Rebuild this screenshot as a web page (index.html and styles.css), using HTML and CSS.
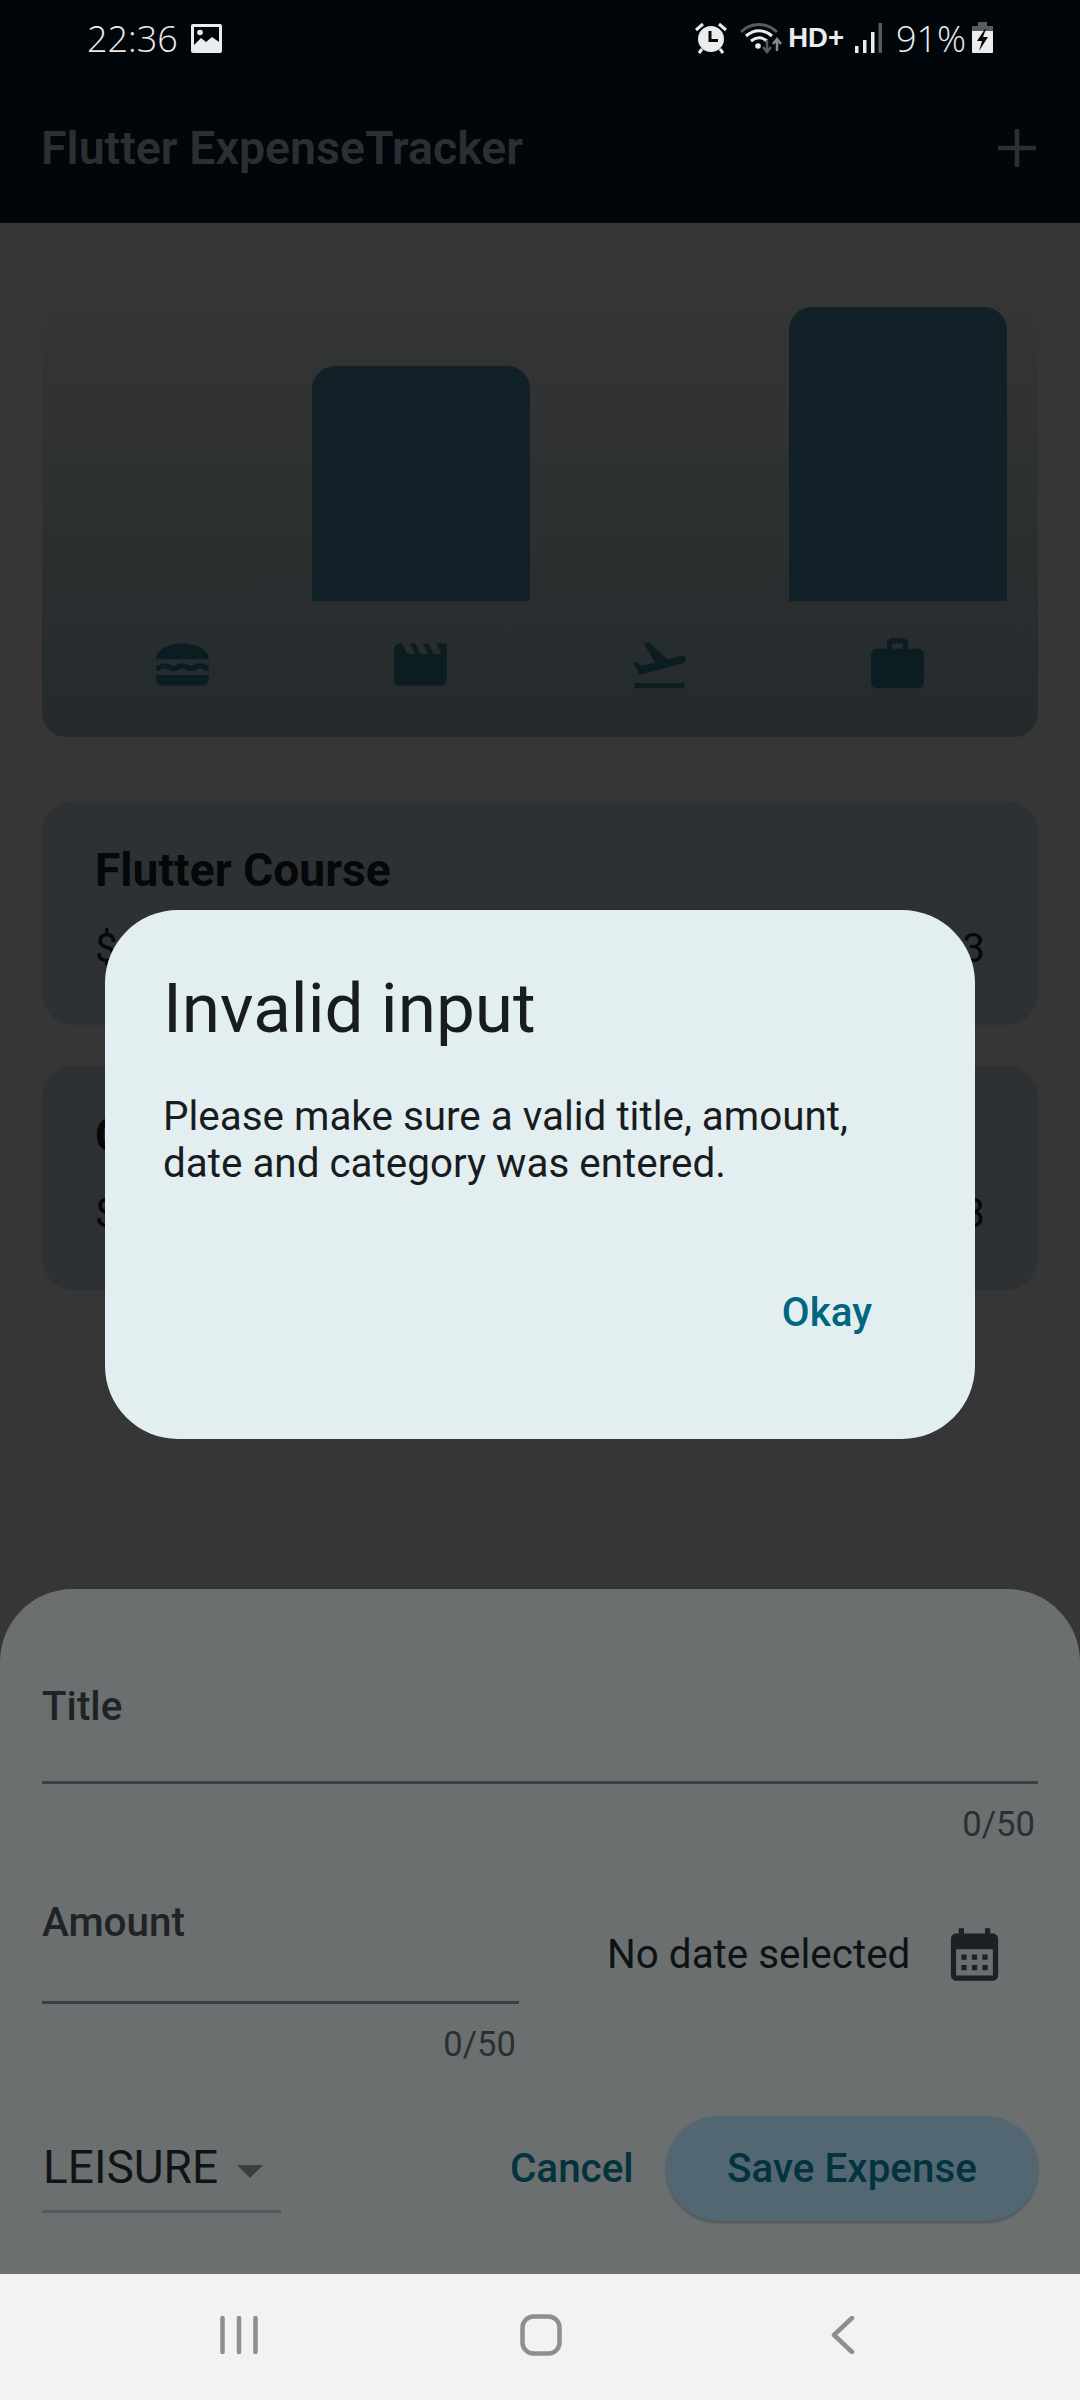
FILE: index.html

```html
<!DOCTYPE html>
<html lang="en">
<head>
  <meta charset="UTF-8">
  <meta name="viewport" content="width=device-width, initial-scale=1.0">
  <title>Flutter ExpenseTracker</title>
  <link rel="stylesheet" href="styles.css">
</head>
<body>
  <div class="phone">
    <div class="top">
      <div class="status">
        <div class="status-left">
          <span class="clock">22:36</span>
          <svg class="st-image" width="31" height="29" viewBox="0 0 31 29">
            <rect width="31" height="29" rx="2" fill="#ececec"/>
            <rect x="3" y="3" width="25" height="19" fill="#01060b"/>
            <circle cx="9" cy="8.500" r="2.800" fill="#ececec"/>
            <path d="M3 21l7-7 5 4 6-5 7 5v5H3z" fill="#ececec"/>
          </svg>
        </div>
        <div class="status-right">
          <svg class="st-alarm" width="34" height="32" viewBox="0 0 34 32">
            <path d="M2 8l7-6M32 8l-7-6M8 27l-3 4M26 27l3 4" stroke="#ececec" stroke-width="3" fill="none"/>
            <circle cx="17" cy="17" r="13" fill="#ececec"/>
            <path d="M16 9v9.500h8" stroke="#01060b" stroke-width="3" fill="none"/>
          </svg>
          <svg class="st-wifi" width="42" height="32" viewBox="0 0 42 32">
            <path d="M1 10C11 0 27 0 37 10" stroke="#5a5a5a" stroke-width="3" fill="none"/>
            <path d="M6 14c8-7 18-7 26 0M11 19c5-4 11-4 16 0" stroke="#ececec" stroke-width="3" fill="none"/>
            <circle cx="18" cy="24" r="2.800" fill="#ececec"/>
            <path d="M27 18v11M23 25l4 5 4-5" stroke="#5a5a5a" stroke-width="2.500" fill="none"/>
            <path d="M37 29V18M33 22l4-5 4 5" stroke="#8a8a8a" stroke-width="2.500" fill="none"/>
          </svg>
          <span class="hd">HD+</span>
          <svg class="st-signal" width="27" height="30" viewBox="0 0 27 30">
            <rect x="0" y="23" width="3.500" height="7" fill="#ececec"/>
            <rect x="8" y="17" width="3.500" height="13" fill="#ececec"/>
            <rect x="16" y="9" width="3.500" height="21" fill="#ececec"/>
            <rect x="23.500" y="0" width="3.500" height="30" fill="#5a5a5a"/>
          </svg>
          <span class="percent">91%</span>
          <svg class="st-battery" width="21" height="32" viewBox="0 0 21 32">
            <path d="M6 0h9v4h6v5H0V4h6z" fill="#5a5a5a"/>
            <path d="M0 9h21v21a1 1 0 0 1-1 1H1a1 1 0 0 1-1-1z" fill="#ececec"/>
            <path d="M13 7L5 19h5l-3 10 9-14h-5l3-8z" fill="#01060b"/>
          </svg>
        </div>
      </div>
      <div class="appbar">
        <span class="appbar-title">Flutter ExpenseTracker</span>
        <svg class="add-icon" width="38" height="38" viewBox="0 0 38 38">
          <path d="M19 0v38M0 19h38" stroke="#2a2f33" stroke-width="4.500"/>
        </svg>
      </div>
    </div>

    <main class="content">
      <section class="chart">
        <div class="bars">
          <div class="bar-col"></div>
          <div class="bar-col"><div class="bar" style="height: 74.6%"></div></div>
          <div class="bar-col"></div>
          <div class="bar-col"><div class="bar" style="height: 93.3%"></div></div>
        </div>
        <div class="chart-icons">
          <div class="chart-icon"><svg width="63" height="63" viewBox="0 0 24 24"><path d="M22 10c.32-3.280-4.280-6-9.990-6S1.670 6.720 2.010 10H22zM5.350 13.500c.550 0 .780.140 1.150.360.450.270 1.070.640 2.180.640s1.730-.370 2.180-.640c.370-.230.590-.360 1.150-.360.550 0 .780.140 1.150.360.450.270 1.070.640 2.180.640s1.730-.370 2.180-.640c.370-.230.590-.360 1.150-.360.550 0 .780.140 1.150.360.450.270 1.070.630 2.170.640v-1.980s-.790-.160-1.160-.380c-.450-.270-1.070-.640-2.180-.640s-1.730.370-2.180.640c-.370.230-.600.360-1.150.360s-.780-.140-1.150-.360c-.450-.270-1.070-.640-2.180-.640s-1.730.370-2.180.640c-.370.230-.590.360-1.150.360-.550 0-.780-.140-1.150-.360-.450-.270-1.070-.640-2.180-.640s-1.730.370-2.180.640c-.370.230-.590.360-1.150.360v1.980c1.110 0 1.730-.370 2.210-.640.370-.230.590-.360 1.140-.360zM2 16v2c0 1.100.900 2 2 2h16c1.100 0 2-.900 2-2v-2H2z"/></svg></div>
          <div class="chart-icon"><svg width="63" height="63" viewBox="0 0 24 24"><path d="M18 4l2 4h-3l-2-4h-2l2 4h-3l-2-4H8l2 4H7L5 4H4c-1.100 0-1.990.900-1.990 2L2 18c0 1.100.900 2 2 2h16c1.100 0 2-.900 2-2V4h-4z"/></svg></div>
          <div class="chart-icon"><svg width="63" height="63" viewBox="0 0 24 24"><path d="M2.500 19h19v2h-19zm19.570-9.360c-.210-.800-1.040-1.280-1.840-1.060L14.920 10l-6.900-6.430-1.930.510 4.140 7.170-4.970 1.330-1.970-1.540-1.450.390 2.590 4.490L21 11.490c.810-.230 1.280-1.050 1.070-1.850z"/></svg></div>
          <div class="chart-icon"><svg width="63" height="63" viewBox="0 0 24 24"><path d="M20 6h-4V4c0-1.110-.890-2-2-2h-4c-1.110 0-2 .890-2 2v2H4c-1.110 0-1.990.890-1.990 2L2 19c0 1.110.890 2 2 2h16c1.110 0 2-.890 2-2V8c0-1.110-.890-2-2-2zm-6 0h-4V4h4v2z"/></svg></div>
        </div>
      </section>

      <section class="expense">
        <h2 class="expense-title">Flutter Course</h2>
        <div class="expense-row"><span>$19.99</span><span>8/21/2023</span></div>
      </section>
      <section class="expense">
        <h2 class="expense-title">Cinema</h2>
        <div class="expense-row"><span>$15.69</span><span>8/21/2023</span></div>
      </section>
    </main>

    <div class="sheet">
      <div class="field">
        <div class="field-label">Title</div>
        <div class="field-line"></div>
        <div class="counter">0/50</div>
      </div>
      <div class="amount-row">
        <div class="field amount">
          <div class="field-label">Amount</div>
          <div class="field-line"></div>
          <div class="counter">0/50</div>
        </div>
        <div class="date-pick">
          <span>No date selected</span>
          <svg width="63" height="63" viewBox="0 0 24 24"><path d="M19 4h-1V2h-2v2H8V2H6v2H5c-1.110 0-1.990.900-1.990 2L3 20c0 1.100.890 2 2 2h14c1.100 0 2-.900 2-2V6c0-1.100-.900-2-2-2zm0 16H5V10h14v10zM9 14H7v-2h2v2zm4 0h-2v-2h2v2zm4 0h-2v-2h2v2zm-8 4H7v-2h2v2zm4 0h-2v-2h2v2zm4 0h-2v-2h2v2z"/></svg>
        </div>
      </div>
      <div class="actions">
        <div class="dropdown">
          <span>LEISURE</span>
          <i class="caret"></i>
        </div>
        <span class="btn-text">Cancel</span>
        <span class="btn-save">Save Expense</span>
      </div>
    </div>

    <div class="dialog">
      <h1 class="dialog-title">Invalid input</h1>
      <p class="dialog-body">Please make sure a valid title, amount, date and category was entered.</p>
      <div class="dialog-actions"><span class="okay">Okay</span></div>
    </div>

    <nav class="navbar">
      <svg width="38" height="38" viewBox="0 0 38 38"><path d="M2.500 2v34M19 2v34M35.500 2v34" stroke="#8e8e8e" stroke-width="4.500" stroke-linecap="round"/></svg>
      <svg width="42" height="42" viewBox="0 0 42 42"><rect x="2.500" y="2.500" width="37" height="37" rx="11" fill="none" stroke="#8e8e8e" stroke-width="4.500"/></svg>
      <svg width="24" height="38" viewBox="0 0 24 38"><path d="M21 2L3 19l18 17" fill="none" stroke="#8e8e8e" stroke-width="4.500" stroke-linecap="round" stroke-linejoin="round"/></svg>
    </nav>
  </div>
</body>
</html>
```

FILE: styles.css

```css
* {
  box-sizing: border-box;
}
body {
  margin: 0;
  font-family: Roboto, "Noto Sans", sans-serif;
  background-color: #363636;
}
.phone {
  position: relative;
  width: 1080px;
  height: 2400px;
  overflow: hidden;
  background-color: #363636;
}

/* status + app bar */
.top {
  height: 223px;
  background-color: #01060b;
}
.status {
  height: 70px;
  display: flex;
  justify-content: space-between;
  align-items: center;
  padding: 6px 87px 0;
  color: #ececec;
}
.status-left, .status-right {
  display: flex;
  align-items: center;
}
.clock {
  font-family: "Open Sans", sans-serif;
  font-weight: 300;
  font-size: 36px;
  margin-right: 13px;
}
.status-right svg, .hd, .percent {
  flex: none;
}
.st-wifi { margin-left: 12px; }
.hd {
  margin-left: 6px;
  font-family: "Liberation Sans", sans-serif;
  font-weight: 700;
  font-size: 27.500px;
}
.st-signal { margin-left: 11px; }
.percent {
  margin-left: 14px;
  font-family: "Open Sans", sans-serif;
  font-weight: 300;
  font-size: 36px;
  width: 76px;
}
.st-battery { margin-left: 0; }
.appbar {
  height: 153px;
  display: flex;
  justify-content: space-between;
  align-items: center;
  padding: 2px 44px 0 41px;
}
.appbar-title {
  font-size: 46.500px;
  font-weight: 600;
  color: #2a2f33;
}
.add-icon {
  margin-top: 1px;
}

/* chart */
.content {
  padding: 42px 42px 0;
}
.chart {
  height: 472px;
  padding: 21px 21px 41px;
  border-radius: 24px;
  background: linear-gradient(#363636, #242a2c);
  display: flex;
  flex-direction: column;
}
.bars {
  height: 315px;
  display: flex;
  align-items: flex-end;
}
.bar-col {
  flex: 1;
  height: 100%;
  padding: 0 10.500px;
  display: flex;
  align-items: flex-end;
}
.bar {
  width: 100%;
  background-color: #112127;
  border-radius: 23px 23px 0 0;
}
.chart-icons {
  display: flex;
  margin-top: 31.500px;
}
.chart-icon {
  flex: 1;
  height: 63px;
  display: flex;
  justify-content: center;
  fill: #0c1d22;
}

/* expense list */
.expense {
  height: 224px;
  margin-top: 64px;
  padding: 42px 53px 0;
  border-radius: 32px;
  background-color: #2d3134;
  color: #050708;
}
.expense + .expense {
  margin-top: 41px;
}
.expense-title {
  margin: 0;
  font-size: 46.200px;
  font-weight: 700;
}
.expense-row {
  margin-top: 28px;
  display: flex;
  justify-content: space-between;
  font-size: 40.400px;
}

/* dialog */
.dialog {
  position: absolute;
  left: 105px;
  top: 910px;
  width: 870px;
  height: 529px;
  padding: 58px 58px 0;
  border-radius: 73px;
  background-color: #e2eef0;
}
.dialog-title {
  margin: 0;
  font-size: 69.300px;
  font-weight: 400;
  color: #191c1e;
}
.dialog-body {
  margin: 44px 0 0;
  font-size: 40.400px;
  line-height: 47px;
  color: #191c1e;
}
.dialog-actions {
  margin-top: 102px;
  display: flex;
  justify-content: flex-end;
  padding-right: 45px;
}
.okay {
  font-size: 40.400px;
  font-weight: 500;
  color: #006780;
}

/* bottom sheet */
.sheet {
  position: absolute;
  left: 0;
  top: 1589px;
  width: 1080px;
  height: 685px;
  padding: 93px 42px 0;
  border-radius: 73px 73px 0 0;
  background-color: #6b6f70;
}
.field-label {
  height: 50px;
  font-size: 40.400px;
  font-weight: 500;
  line-height: 50px;
  color: #1f2325;
}
.field-line {
  height: 3px;
  margin-top: 49px;
  background-color: #3c4043;
}
.counter {
  margin-top: 20px;
  padding-right: 3px;
  text-align: right;
  font-size: 34.650px;
  color: #2b2f31;
}
.amount-row {
  display: flex;
  margin-top: 54px;
}
.amount {
  width: 477px;
  flex: none;
}
.amount .field-line {
  margin-top: 53px;
}
.date-pick {
  margin-left: 88px;
  display: flex;
  align-items: center;
  height: 63px;
  margin-top: 25px;
  font-size: 40.400px;
  color: #0f1214;
  fill: #1c2124;
}
.date-pick svg {
  margin-left: 33px;
}
.actions {
  display: flex;
  align-items: flex-start;
  margin-top: 52px;
}
.dropdown {
  width: 239px;
  height: 97px;
  padding: 24px 1px 0;
  border-bottom: 3px solid #55595b;
  display: flex;
  font-size: 46px;
  color: #111415;
}
.caret {
  margin: 25px 0 0 19px;
  border-left: 13px solid transparent;
  border-right: 13px solid transparent;
  border-top: 13px solid #3c3f40;
  width: 0;
  height: 0;
}
.btn-text {
  margin-left: 229px;
  margin-top: 29px;
  font-size: 40.400px;
  font-weight: 500;
  color: #03333f;
}
.btn-save {
  margin-left: auto;
  width: 372px;
  height: 105px;
  line-height: 105px;
  text-align: center;
  border-radius: 53px;
  background-color: #536772;
  box-shadow: 0 2px 3px rgba(0, 0, 0, 0.25);
  font-size: 40.400px;
  font-weight: 500;
  color: #03333f;
}

/* system nav */
.navbar {
  position: absolute;
  left: 0;
  bottom: 0;
  width: 1080px;
  height: 126px;
  padding-bottom: 4px;
  display: flex;
  align-items: center;
  background-color: #f2f2f2;
}
.navbar svg:nth-child(1) { margin-left: 220px; }
.navbar svg:nth-child(2) { margin-left: 262px; }
.navbar svg:nth-child(3) { margin-left: 269px; }
```
